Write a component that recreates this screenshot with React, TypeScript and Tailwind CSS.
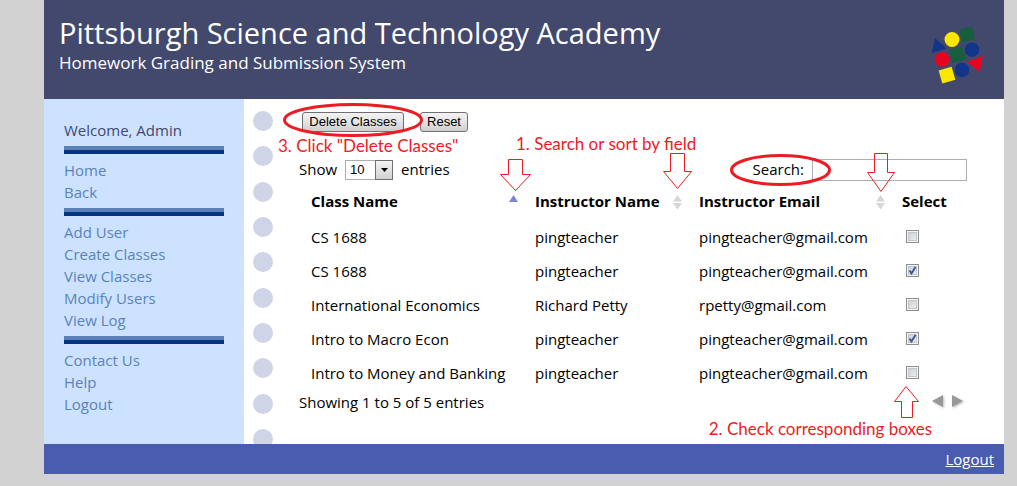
import React, { useState } from "react";

type ClassRow = { name: string; instructor: string; email: string; selected: boolean };

const initialRows: ClassRow[] = [
  { name: "CS 1688", instructor: "pingteacher", email: "pingteacher@gmail.com", selected: false },
  { name: "CS 1688", instructor: "pingteacher", email: "pingteacher@gmail.com", selected: true },
  { name: "International Economics", instructor: "Richard Petty", email: "rpetty@gmail.com", selected: false },
  { name: "Intro to Macro Econ", instructor: "pingteacher", email: "pingteacher@gmail.com", selected: true },
  { name: "Intro to Money and Banking", instructor: "pingteacher", email: "pingteacher@gmail.com", selected: false },
];

const menu = [
  ["Home", "Back"],
  ["Add User", "Create Classes", "View Classes", "Modify Users", "View Log"],
  ["Contact Us", "Help", "Logout"],
];

const buttonClass =
  "h-5 shrink-0 whitespace-nowrap rounded-[3px] border border-[#707070] bg-linear-to-b from-[#f3f3f3] via-[#e4e4e4] to-[#cfcfcf] px-[5px] font-['Liberation_Sans',sans-serif] text-[13px] leading-[18px] text-black";

const noteClass =
  "pointer-events-none absolute whitespace-nowrap font-['Lato',sans-serif] text-[17px] leading-6 font-normal text-[#ed1c24]";

function Logo() {
  return (
    <svg className="mt-[26px] mr-[21px] h-[58px] w-[52px] shrink-0" viewBox="931 26 52 58" aria-hidden="true">
      <circle cx="952" cy="39.5" r="7.5" fill="#fce700" />
      <rect x="960.5" y="28" width="13" height="13" fill="#165e3c" transform="rotate(-16 967 34.5)" />
      <path d="M935 38 946.5 48.5 931.8 53z" fill="#12358a" />
      <circle cx="972" cy="49.7" r="7.3" fill="#12358a" />
      <circle cx="942" cy="59.3" r="7.4" fill="#e8041f" />
      <rect x="950.5" y="48" width="13.5" height="13.5" fill="#165e3c" transform="rotate(-16 957 54.7)" />
      <path d="M967 61.8 983 56 979.3 72z" fill="#e8041f" />
      <circle cx="962" cy="70" r="7.3" fill="#12358a" />
      <rect x="940.2" y="68.3" width="13.5" height="13.5" fill="#fce700" transform="rotate(-16 947 75)" />
    </svg>
  );
}

function SortIcon({ ascending = false }: { ascending?: boolean }) {
  return (
    <svg className="h-4 w-[9px] shrink-0" viewBox="0 0 9 16" aria-hidden="true">
      {ascending ? (
        <path d="M4.5 1 9 8H0z" fill="#7d82dc" />
      ) : (
        <path d="M4.5 1 9 7.5H0zM0 9H9L4.5 15.5z" fill="#d6d6d6" />
      )}
    </svg>
  );
}

function Ring({ className, width, height }: { className: string; width: number; height: number }) {
  return (
    <svg className={`pointer-events-none absolute ${className}`} viewBox={`0 0 ${width} ${height}`} aria-hidden="true">
      <ellipse cx={width / 2} cy={height / 2} rx={width / 2 - 1.5} ry={height / 2 - 1.5} fill="none" stroke="#ed1c24" strokeWidth="3" />
    </svg>
  );
}

function Arrow({ className, box, points }: { className: string; box: string; points: string }) {
  return (
    <svg className={`pointer-events-none absolute ${className}`} viewBox={box} aria-hidden="true">
      <polygon points={points} fill="none" stroke="#ed1c24" strokeWidth="1" />
    </svg>
  );
}

export default function App() {
  const [rows, setRows] = useState(initialRows);
  const [query, setQuery] = useState("");

  const toggle = (index: number) =>
    setRows(rows.map((row, i) => (i === index ? { ...row, selected: !row.selected } : row)));

  return (
    <div className="min-h-screen bg-[#d2d2d2] pr-[13px] pl-11 font-['Open_Sans','Noto_Sans',sans-serif] text-[15px] text-black">
      <header className="flex h-[99px] items-start justify-between bg-[#42496c] pl-[15px] text-white">
        <div className="pt-[15px]">
          <h1 className="text-[29px] leading-9">Pittsburgh Science and Technology Academy</h1>
          <p className="text-[17px] leading-6">Homework Grading and Submission System</p>
        </div>
        <Logo />
      </header>

      <div className="flex bg-white">
        <nav className="w-[200px] shrink-0 bg-[#cde2ff] px-5 pt-5 pb-[29px] leading-[22px]">
          <p className="text-[#42496c]">Welcome, Admin</p>
          {menu.map((group) => (
            <div key={group[0]}>
              <hr className="my-[5px] h-2 border-0 border-t-4 border-[#5a82b8] bg-[#07347f]" />
              <ul>
                {group.map((item) => (
                  <li key={item}>
                    <a href="#" className="text-[#5a82b8]">{item}</a>
                  </li>
                ))}
              </ul>
            </div>
          ))}
        </nav>

        <div className="relative w-[55px] shrink-0 overflow-hidden" aria-hidden="true">
          <div className="absolute top-3 -bottom-[5px] left-[9px] flex flex-col justify-between">
            {Array.from({ length: 10 }, (_, i) => (
              <span key={i} className="size-5 rounded-full bg-[#cfd4e7]" />
            ))}
          </div>
        </div>

        <main className="relative min-w-0 grow pt-[13px] pr-[37px]">
          <div className="flex gap-4 pl-[3px]">
            <div className="relative flex">
              <button type="button" className={`${buttonClass} w-[102px]`}>Delete Classes</button>
              <Ring className="-top-[9px] -left-[19px] h-[34px] w-[140px]" width={140} height={34} />
              <span className={`${noteClass} top-[22px] -left-6`}>3. Click "Delete Classes"</span>
            </div>
            <button type="button" className={`${buttonClass} w-12`}>Reset</button>
          </div>

          <div className="mt-[26px] flex h-[23px] items-center justify-between">
            <div className="flex items-center gap-2">
              <label htmlFor="page-size">Show</label>
              <span className="relative flex">
                <select
                  id="page-size"
                  defaultValue="10"
                  className="h-5 w-12 appearance-none border border-[#abadb3] bg-white pl-1 font-['Liberation_Sans',sans-serif] text-[13px] leading-[18px]"
                >
                  <option>10</option>
                  <option>25</option>
                  <option>50</option>
                  <option>100</option>
                </select>
                <span className="pointer-events-none absolute inset-y-0 right-0 flex w-[18px] items-center justify-center border border-[#707070] bg-linear-to-b from-[#f3f3f3] to-[#d2d2d2]">
                  <svg className="h-1 w-[7px]" viewBox="0 0 7 4" aria-hidden="true">
                    <path d="M0 0H7L3.5 4z" />
                  </svg>
                </span>
              </span>
              <span>entries</span>
            </div>
            <div className="flex items-center gap-2">
              <label htmlFor="search" className="relative">
                Search:
                <Ring className="-top-1 -left-[23px] z-10 h-8 w-[101px]" width={101} height={32} />
              </label>
              <input
                id="search"
                value={query}
                onChange={(e) => setQuery(e.target.value)}
                className="h-[22px] w-[155px] border border-[#abadb3] bg-white px-1 text-[13px]"
              />
            </div>
          </div>

          <table className="mt-[6px] w-full table-fixed text-left">
            <colgroup>
              <col className="w-[224px]" />
              <col className="w-[164px]" />
              <col className="w-[203px]" />
              <col />
            </colgroup>
            <thead>
              <tr className="h-[33px]">
                <th className="relative pr-[5px] pb-1 pl-3">
                  <div className="flex items-center justify-between">
                    Class Name
                    <SortIcon ascending />
                  </div>
                  <span className={`${noteClass} -top-[55px] left-[217px]`}>1. Search or sort by field</span>
                  <Arrow className="-top-[28px] -right-2 h-8 w-[31px]" box="0 0 31 32" points="8.5,0.5 22.5,0.5 22.5,15.5 30.5,15.5 15.5,31.5 0.5,15.5 8.5,15.5" />
                </th>
                <th className="relative pr-[5px] pb-1 pl-3">
                  <div className="flex items-center justify-between">
                    Instructor Name
                    <SortIcon />
                  </div>
                  <Arrow className="-top-[34px] -right-[5px] h-9 w-[29px]" box="0 0 29 36" points="7.5,0.5 21.5,0.5 21.5,18.5 28.5,18.5 14.5,35.5 0.5,18.5 7.5,18.5" />
                </th>
                <th className="relative pr-[5px] pb-1 pl-3">
                  <div className="flex items-center justify-between">
                    Instructor Email
                    <SortIcon />
                  </div>
                  <Arrow className="-top-[34px] -right-[5px] z-10 h-[39px] w-7" box="0 0 28 39" points="7.5,0.5 20.5,0.5 20.5,19.5 27.5,19.5 14,38.5 0.5,19.5 7.5,19.5" />
                </th>
                <th className="pb-1 pl-3">Select</th>
              </tr>
            </thead>
            <tbody>
              {rows.map((row, i) => (
                <tr key={i} className="h-[34px]">
                  <td className="pl-3 whitespace-nowrap">{row.name}</td>
                  <td className="pl-3">{row.instructor}</td>
                  <td className="pl-3">{row.email}</td>
                  <td className="pb-0.5 pl-4">
                    <span className="relative flex size-[13px]">
                      <input
                        type="checkbox"
                        aria-label={`Select ${row.name}`}
                        checked={row.selected}
                        onChange={() => toggle(i)}
                        className="size-[13px] appearance-none border border-[#8e8f8f] bg-linear-to-br from-[#c4c9d0] to-[#f6f6f6] shadow-[inset_0_0_0_1px_#f4f4f4,inset_0_0_0_2px_#c3c6cb]"
                      />
                      {row.selected && (
                        <svg className="pointer-events-none absolute inset-0 size-[13px]" viewBox="0 0 13 13" aria-hidden="true">
                          <path d="M3.5 6.5 5.5 9.5 9.5 3" fill="none" stroke="#40559b" strokeWidth="2" />
                        </svg>
                      )}
                    </span>
                  </td>
                </tr>
              ))}
            </tbody>
          </table>

          <div className="relative mt-px flex h-[22px] items-center justify-between">
            <span>Showing 1 to 5 of 5 entries</span>
            <span className="mr-[3px] flex gap-2">
              <button type="button" aria-label="Previous page" className="flex">
                <svg className="h-4 w-3 drop-shadow-[1px_1px_1px_#bbbbbb]" viewBox="0 0 12 16" aria-hidden="true">
                  <path d="M0 7 11 1V13z" fill="#989898" />
                </svg>
              </button>
              <button type="button" aria-label="Next page" className="flex">
                <svg className="h-4 w-3 drop-shadow-[1px_1px_1px_#bbbbbb]" viewBox="0 0 12 16" aria-hidden="true">
                  <path d="M11 7 0 1V13z" fill="#989898" />
                </svg>
              </button>
            </span>
            <Arrow className="-top-[5px] right-12 h-8 w-[25px]" box="0 0 25 32" points="12,0.5 24.5,15.5 18.5,15.5 18.5,31.5 7.5,31.5 7.5,15.5 0.5,15.5" />
            <span className={`${noteClass} top-[26px] right-[35px]`}>2. Check corresponding boxes</span>
          </div>
        </main>
      </div>

      <footer className="flex h-[30px] items-center justify-end bg-[#495caf] pr-2.5">
        <a href="#" className="text-white underline">Logout</a>
      </footer>
    </div>
  );
}
